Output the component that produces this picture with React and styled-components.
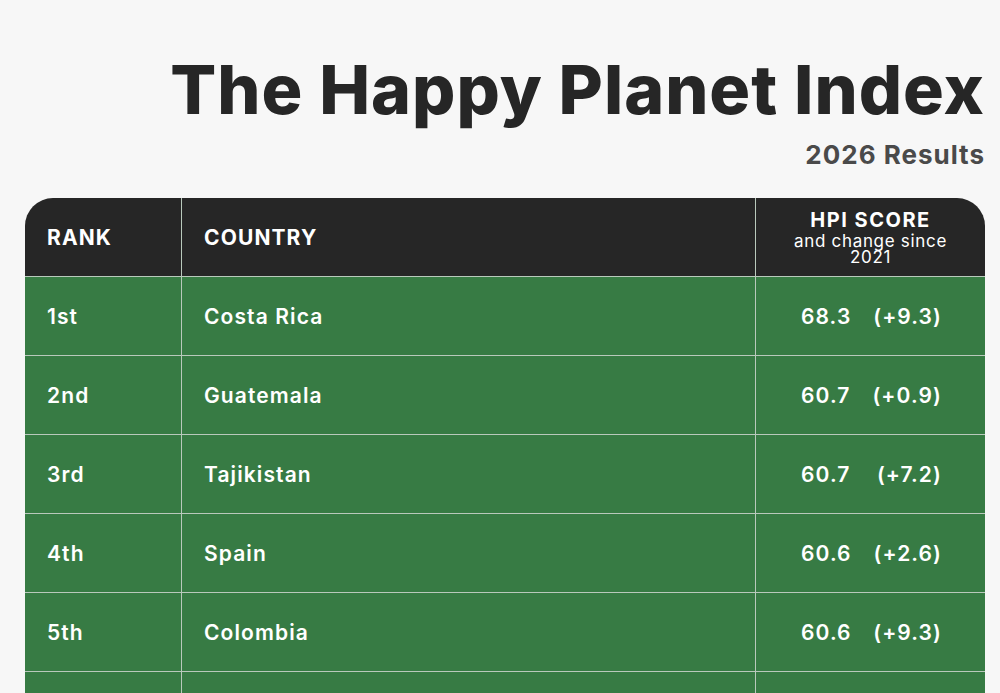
import styled, { createGlobalStyle } from "styled-components";

const GlobalStyle = createGlobalStyle`
  body {
    margin: 0;
    background: #f7f7f7;
    font-family: Inter, "Noto Sans", "Liberation Sans", sans-serif;
  }
`;

const Page = styled.div`
  padding: 49px 15px 0 25px;
  height: 693px;
  box-sizing: border-box;
  overflow: hidden;
`;

const Heading = styled.header`
  text-align: right;
`;

const Title = styled.h1`
  margin: 0;
  font-size: 68px;
  font-weight: 800;
  line-height: 80px;
  letter-spacing: 1px;
  color: #262626;
`;

const Subtitle = styled.h2`
  margin: 10px 0 0;
  font-size: 26px;
  font-weight: 700;
  line-height: 32px;
  letter-spacing: 1px;
  color: #4a4a4a;
`;

const Table = styled.div`
  margin-top: 27px;
  display: grid;
  grid-template-columns: 157px 574px 229px;
  border-radius: 28px 28px 0 0;
  overflow: hidden;
`;

const Cell = styled.div`
  box-sizing: border-box;
  height: 79px;
  display: flex;
  align-items: center;
  justify-content: ${(p) => (p.$center ? "center" : "flex-start")};
  padding-left: ${(p) => (p.$center ? "0" : "22px")};
  background: ${(p) => (p.$head ? "#262626" : "#377b44")};
  color: #fff;
  font-size: 21px;
  font-weight: ${(p) => (p.$head ? 700 : 600)};
  letter-spacing: 1.1px;
  border-bottom: 1px solid #b9c9bc;
  border-right: ${(p) => (p.$last ? "none" : "1px solid #b9c9bc")};
`;

const ScoreHead = styled.div`
  text-align: center;
`;

const ScoreTitle = styled.div`
  font-size: 20px;
  font-weight: 700;
  line-height: 22px;
  letter-spacing: 1.5px;
`;

const ScoreNote = styled.div`
  width: 175px;
  margin: 2px auto 0;
  font-size: 17px;
  font-weight: 400;
  line-height: 16px;
  letter-spacing: 0.7px;
`;

const Score = styled.div`
  width: 141px;
  padding-left: 2px;
  display: flex;
  justify-content: space-between;
`;

const rows = [
  ["1st", "Costa Rica", "68.3", "(+9.3)"],
  ["2nd", "Guatemala", "60.7", "(+0.9)"],
  ["3rd", "Tajikistan", "60.7", "(+7.2)"],
  ["4th", "Spain", "60.6", "(+2.6)"],
  ["5th", "Colombia", "60.6", "(+9.3)"],
  ["6th", "Ecuador", "60.6", "(+2.3)"],
];

export default function App() {
  return (
    <Page>
      <GlobalStyle />
      <Heading>
        <Title>The Happy Planet Index</Title>
        <Subtitle>2026 Results</Subtitle>
      </Heading>
      <Table>
        <Cell $head>RANK</Cell>
        <Cell $head>COUNTRY</Cell>
        <Cell $head $center $last>
          <ScoreHead>
            <ScoreTitle>HPI SCORE</ScoreTitle>
            <ScoreNote>and change since 2021</ScoreNote>
          </ScoreHead>
        </Cell>
        {rows.map(([rank, country, score, change]) => (
          <>
            <Cell key={rank + "r"}>{rank}</Cell>
            <Cell key={rank + "c"}>{country}</Cell>
            <Cell key={rank + "s"} $center $last>
              <Score>
                <span>{score}</span>
                <span>{change}</span>
              </Score>
            </Cell>
          </>
        ))}
      </Table>
    </Page>
  );
}
